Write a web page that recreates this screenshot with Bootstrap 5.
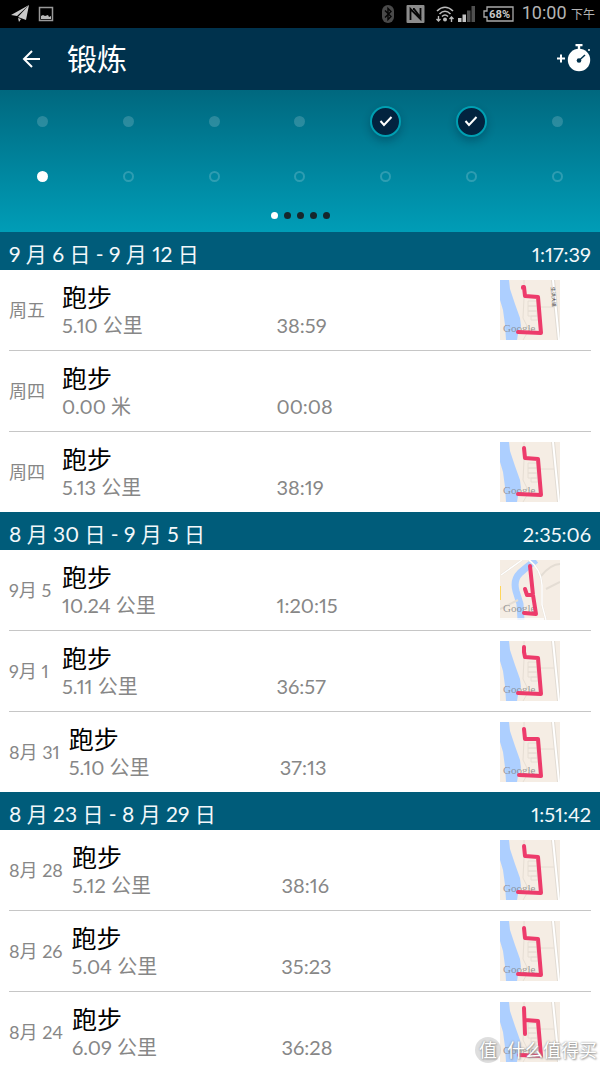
<!DOCTYPE html>
<html lang="zh-CN">
<head>
<meta charset="utf-8">
<meta name="viewport" content="width=device-width, initial-scale=1">
<title>锻炼</title>
<link href="https://cdn.jsdelivr.net/npm/bootstrap@5.3.0/dist/css/bootstrap.min.css" rel="stylesheet">
<style>
  body { font-family: Lato, "Noto Sans CJK SC", sans-serif; font-variant-numeric: proportional-nums; background: #fff; }
  svg { display: block; flex: none; }
  .status-bar { height: 28px; background: #000; color: #b4b4b4; padding: 0 5px 0 10px; }
  .clock { font: 18px/28px Roboto, "Noto Sans CJK SC", sans-serif; }
  .clock small { font-size: 12px; }
  .app-bar { height: 62px; background: #00324d; color: #fff; padding: 0 9px 2px 20px; }
  .app-bar h1 { font-size: 30px; line-height: 40px; font-weight: 400; margin-left: 25px; }
  .bar-btn { color: #fff; border: 0; padding: 0; background: none; }
  .week-panel { height: 142px; background: linear-gradient(#00687f, #009db7); padding-top: 15px; }
  .week-row { display: grid; grid-template-columns: repeat(7, 1fr); justify-items: center; align-items: center; height: 32px; }
  .week-row + .week-row { margin-top: 23px; }
  .day { width: 11px; height: 11px; border-radius: 50%; background: rgba(255,255,255,.17); }
  .day-open { background: none; border: 2px solid rgba(255,255,255,.18); }
  .day-now { background: #fff; }
  .day-done { width: 31px; height: 31px; background: #02233f; border: 2px solid #009fb2; box-shadow: 0 4px 8px rgba(0,30,50,.3); display: grid; place-items: center; }
  .pager { gap: 6px; margin-top: 20px; }
  .pager button { width: 7px; height: 7px; border: 0; padding: 0; border-radius: 50%; background: #16262c; }
  .pager .active { background: #fff; }
  .log { overflow-y: auto; scrollbar-width: none; }
  .log::-webkit-scrollbar { display: none; }
  .week-head { height: 38px; background: #005c7a; color: #f3f8fa; padding: 7px 9px 0; }
  .week-head h2, .week-head span { font-size: 20px; line-height: 30px; font-weight: 400; margin: 0; }
  .week-head h2 { font-size: 21px; }
  .runs { margin: 0 9px; }
  .run { height: 80px; gap: 9px; color: #878787; text-decoration: none; }
  li + li .run { border-top: 1px solid #c6c6c6; height: 81px; }
  .run-date { font-size: 18px; line-height: 24px; min-width: 44px; white-space: nowrap; }
  .run-name { font-size: 25px; line-height: 30px; font-weight: 400; color: #000; }
  .run-fact { font-size: 20px; line-height: 26px; }
  .run-map { width: 60px; height: 60px; margin-right: 31px; flex: none; }
  .run-map text { font: 11px "Liberation Serif", serif; fill: rgba(125,125,125,.75); }
  .run-map .street { font: 5px "Noto Sans CJK SC", sans-serif; fill: #444; }
  .route { fill: none; stroke: #ed3b6b; stroke-width: 4; stroke-linecap: round; stroke-linejoin: round; }
  .watermark { right: 3px; bottom: 4px; gap: 6px; color: #fff; font-size: 18px; line-height: 26px; text-shadow: 0 0 2px #888, 1px 1px 2px #999; pointer-events: none; }
  .watermark-seal { width: 26px; height: 26px; border-radius: 50%; background: rgba(200,200,200,.6); text-align: center; }
</style>
</head>
<body>
<svg width="0" height="0" class="position-absolute" aria-hidden="true">
  <symbol id="map" viewBox="0 0 60 60">
    <rect width="60" height="60" fill="#f5ede4"/>
    <path d="M0 0H9L10 9 15 24 20 38 21 46 18 54 17 60H6L5 45 3 30 0 20Z" fill="#adcfff"/>
    <path d="M24 0V18L23 38 28 48 40 53M28 21H37V26H28ZM28 26H37V31H28ZM28 31H37V36H28ZM31 36H38V40H31ZM39 27H54M29 50L23 60" fill="none" stroke="#e6ded4"/>
    <path d="M53 0L59 60" stroke="#e2dcd4" stroke-width="4"/><path d="M53 0L59 60" stroke="#fff" stroke-width="2"/>
  </symbol>
</svg>

<div class="vh-100 d-flex flex-column position-relative overflow-hidden">
  <div class="status-bar d-flex align-items-center flex-shrink-0">
    <svg width="20" height="18" viewBox="0 0 20 18" fill="#c9c9c9"><path d="M19 0L1 10l6 1zM19 0L8 12l8 3zM8 13l3 1-2 3z"/></svg>
    <svg class="ms-2" width="16" height="16" viewBox="0 0 16 16"><path d="M1.500 1.500h13v13h-13z" fill="none" stroke="#999" stroke-width="1.500"/><path d="M3 13v-3l2-1 2 1 3-1 1 2 2-1v3z" fill="#bbb"/></svg>
    <div class="ms-auto d-flex align-items-center">
      <svg class="me-1" width="12" height="18" viewBox="0 0 12 18"><rect width="12" height="18" rx="6" fill="#4a4a4a"/><path d="M3 5.500l6 6-3 3v-11l3 3-6 6" fill="none" stroke="#050505" stroke-width="1.400"/></svg>
      <svg class="ms-1 me-2" width="26" height="18" viewBox="0 0 26 18"><rect x="4.500" width="18" height="18" rx="1" fill="#8c8c8c"/><path d="M8.500 15V4l10 10V3M11 4h1l7 9" fill="none" stroke="#080808" stroke-width="1.800"/></svg>
      <svg width="18" height="17" viewBox="1 0 18 17" fill="none" stroke="#bbb" stroke-width="1.600"><path d="M2 5Q10-2.500 18 5M4.500 8Q10 2.500 15.500 8M7 10.500Q10 7.500 13 10.500"/><circle cx="10" cy="13.500" r="2" fill="#bbb" stroke="none"/><path d="M3.500 10v5M1.500 13l2 2 2-2M16.500 16v-5M14.500 13l2-2 2 2" stroke-width="1.400"/></svg>
      <svg class="ms-1" width="17" height="16" viewBox="0 0 17 16"><path d="M0 12h3.500v4H0zM4.500 8.500H8V16H4.500z" fill="#c4c4c4"/><path d="M9 4.500h3.500V16H9zM13.500 0H17v16h-3.500z" fill="#505050"/></svg>
      <svg class="ms-2" width="31" height="16" viewBox="0 0 31 16"><path d="M4 1h26v14H4v-4H1V5h3z" fill="none" stroke="#aaa" stroke-width="1.300"/><text x="6" y="12" font-family="Roboto" font-weight="700" font-size="11" fill="#c8c8c8">68%</text></svg>
      <span class="clock ms-2">10:00 <small>下午</small></span>
    </div>
  </div>

  <header class="app-bar d-flex align-items-center flex-shrink-0">
    <button type="button" class="bar-btn" aria-label="返回"><svg width="22" height="20" viewBox="0 0 22 20" fill="none" stroke="#fff" stroke-width="2"><path d="M20 11H4M12 3L4 11l8 8"/></svg></button>
    <h1 class="mb-0">锻炼</h1>
    <button type="button" class="bar-btn ms-auto" aria-label="添加锻炼"><svg width="35" height="28" viewBox="0 0 35 28"><path d="M1 14.500h8M5 10.500v8" stroke="#fff" stroke-width="2"/><circle cx="23" cy="16" r="11.200" fill="#fff"/><path d="M19.500 1h7M23 1v5" stroke="#fff" stroke-width="2.400"/><circle cx="33" cy="6" r="1" fill="#fff"/><circle cx="23" cy="16.500" r="2.300" fill="#00324d"/><path d="M23 16.500l6-5.500" stroke="#00324d" stroke-width="1.500"/></svg></button>
  </header>

  <section class="week-panel flex-shrink-0" aria-label="本周">
    <div class="week-row">
      <i class="day"></i><i class="day"></i><i class="day"></i><i class="day"></i>
      <i class="day day-done"><svg width="14" height="12" viewBox="0 0 14 12"><path d="M1.500 6l3.500 4 7.500-8" fill="none" stroke="#fff" stroke-width="2"/></svg></i>
      <i class="day day-done"><svg width="14" height="12" viewBox="0 0 14 12"><path d="M1.500 6l3.500 4 7.500-8" fill="none" stroke="#fff" stroke-width="2"/></svg></i>
      <i class="day"></i>
    </div>
    <div class="week-row">
      <i class="day day-now"></i><i class="day day-open"></i><i class="day day-open"></i><i class="day day-open"></i><i class="day day-open"></i><i class="day day-open"></i><i class="day day-open"></i>
    </div>
    <div class="pager d-flex justify-content-center">
      <button type="button" class="active" aria-label="第1页"></button><button type="button" aria-label="第2页"></button><button type="button" aria-label="第3页"></button><button type="button" aria-label="第4页"></button><button type="button" aria-label="第5页"></button>
    </div>
  </section>

  <main class="log flex-grow-1">
    <section>
      <div class="week-head d-flex justify-content-between"><h2>9 月 6 日 - 9 月 12 日</h2><span>1:17:39</span></div>
      <ul class="runs list-unstyled">
        <li><a href="#" class="run d-flex align-items-center">
          <span class="run-date">周五</span>
          <span class="d-flex flex-grow-1 align-items-end"><span class="col"><span class="run-name d-block">跑步</span><span class="run-fact d-block">5.10 公里</span></span><span class="run-fact col">38:59</span></span>
          <svg class="run-map" viewBox="0 0 60 60"><use href="#map"/><text x="3" y="52">Google</text><path class="route" d="M24 7l1 9 13 1 3 36-23-1M23 7v1"/><text class="street" transform="translate(51 7) rotate(86)">生洪大道</text></svg></a></li>
        <li><a href="#" class="run d-flex align-items-center">
          <span class="run-date">周四</span>
          <span class="d-flex flex-grow-1 align-items-end"><span class="col"><span class="run-name d-block">跑步</span><span class="run-fact d-block">0.00 米</span></span><span class="run-fact col">00:08</span></span>
          <span class="run-map"></span></a></li>
        <li><a href="#" class="run d-flex align-items-center">
          <span class="run-date">周四</span>
          <span class="d-flex flex-grow-1 align-items-end"><span class="col"><span class="run-name d-block">跑步</span><span class="run-fact d-block">5.13 公里</span></span><span class="run-fact col">38:19</span></span>
          <svg class="run-map" viewBox="0 0 60 60"><use href="#map"/><text x="3" y="52">Google</text><path class="route" d="M24 6l1 10 13 1 3 36-23-1"/></svg></a></li>
      </ul>
    </section>
    <section>
      <div class="week-head d-flex justify-content-between"><h2>8 月 30 日 - 9 月 5 日</h2><span>2:35:06</span></div>
      <ul class="runs list-unstyled">
        <li><a href="#" class="run d-flex align-items-center">
          <span class="run-date">9月 5</span>
          <span class="d-flex flex-grow-1 align-items-end"><span class="col"><span class="run-name d-block">跑步</span><span class="run-fact d-block">10.24 公里</span></span><span class="run-fact col">1:20:15</span></span>
          <svg class="run-map" viewBox="0 0 60 60"><rect width="60" height="60" fill="#f5ede4"/><path d="M0 26h1v14H0z" fill="#ffd65a"/><path d="M36 0Q28 6 20 13 13 20 16 31L20 44 21 60" fill="none" stroke="#adcfff" stroke-width="7"/><path d="M1 15L22 0M29 0Q41 9 42 25V45L46 60M0 49L18 40M41 16Q51 4 60 4M46 29L60 22" fill="none" stroke="#e4ddd4" stroke-width="2"/><path d="M1 15L22 0M29 0Q41 9 42 25V45L46 60M0 59H44" fill="none" stroke="#fff" stroke-width="1.500"/><text x="3" y="52">Google</text><path class="route" d="M30 6l3 29 3 19-12-1M25 29l2 6h6"/></svg></a></li>
        <li><a href="#" class="run d-flex align-items-center">
          <span class="run-date">9月 1</span>
          <span class="d-flex flex-grow-1 align-items-end"><span class="col"><span class="run-name d-block">跑步</span><span class="run-fact d-block">5.11 公里</span></span><span class="run-fact col">36:57</span></span>
          <svg class="run-map" viewBox="0 0 60 60"><use href="#map"/><text x="3" y="52">Google</text><path class="route" d="M24 6v5l1 5 13 1 3 36-23-1"/></svg></a></li>
        <li><a href="#" class="run d-flex align-items-center">
          <span class="run-date">8月 31</span>
          <span class="d-flex flex-grow-1 align-items-end"><span class="col"><span class="run-name d-block">跑步</span><span class="run-fact d-block">5.10 公里</span></span><span class="run-fact col">37:13</span></span>
          <svg class="run-map" viewBox="0 0 60 60"><use href="#map"/><text x="3" y="52">Google</text><path class="route" d="M24 7l1 10h13l3 37-22-1"/></svg></a></li>
      </ul>
    </section>
    <section>
      <div class="week-head d-flex justify-content-between"><h2>8 月 23 日 - 8 月 29 日</h2><span>1:51:42</span></div>
      <ul class="runs list-unstyled">
        <li><a href="#" class="run d-flex align-items-center">
          <span class="run-date">8月 28</span>
          <span class="d-flex flex-grow-1 align-items-end"><span class="col"><span class="run-name d-block">跑步</span><span class="run-fact d-block">5.12 公里</span></span><span class="run-fact col">38:16</span></span>
          <svg class="run-map" viewBox="0 0 60 60"><use href="#map"/><text x="3" y="52">Google</text><path class="route" d="M24 6l1 10 13 1 3 36-23-1"/></svg></a></li>
        <li><a href="#" class="run d-flex align-items-center">
          <span class="run-date">8月 26</span>
          <span class="d-flex flex-grow-1 align-items-end"><span class="col"><span class="run-name d-block">跑步</span><span class="run-fact d-block">5.04 公里</span></span><span class="run-fact col">35:23</span></span>
          <svg class="run-map" viewBox="0 0 60 60"><use href="#map"/><text x="3" y="52">Google</text><path class="route" d="M24 7l1 10 13 1 3 36-23-1"/></svg></a></li>
        <li><a href="#" class="run d-flex align-items-center">
          <span class="run-date">8月 24</span>
          <span class="d-flex flex-grow-1 align-items-end"><span class="col"><span class="run-name d-block">跑步</span><span class="run-fact d-block">6.09 公里</span></span><span class="run-fact col">36:28</span></span>
          <svg class="run-map" viewBox="0 0 60 60"><use href="#map"/><text x="3" y="52">Google</text><path class="route" d="M24 6l1 26M25 18l13 1 3 35-22-1"/></svg></a></li>
      </ul>
    </section>
  </main>

  <div class="watermark position-absolute d-flex align-items-center"><span class="watermark-seal">值</span><span>什么值得买</span></div>
</div>
<script src="https://cdn.jsdelivr.net/npm/bootstrap@5.3.0/dist/js/bootstrap.bundle.min.js"></script>
</body>
</html>
